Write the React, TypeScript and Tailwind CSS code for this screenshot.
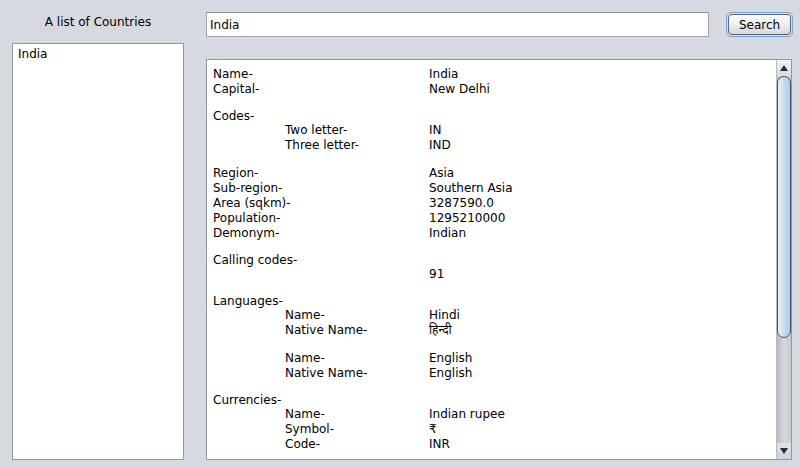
import React from "react";

type Row = { label: string; value?: string; indent?: boolean; header?: boolean; gap?: number };

const rows: Row[] = [
  { label: "Name-", value: "India" },
  { label: "Capital-", value: "New Delhi" },
  { label: "Codes-", header: true, gap: 12 },
  { label: "Two letter-", value: "IN", indent: true },
  { label: "Three letter-", value: "IND", indent: true },
  { label: "Region-", value: "Asia", gap: 13 },
  { label: "Sub-region-", value: "Southern Asia" },
  { label: "Area (sqkm)-", value: "3287590.0" },
  { label: "Population-", value: "1295210000" },
  { label: "Demonym-", value: "Indian" },
  { label: "Calling codes-", header: true, gap: 12 },
  { label: "", value: "91" },
  { label: "Languages-", header: true, gap: 12 },
  { label: "Name-", value: "Hindi", indent: true },
  { label: "Native Name-", value: "हिन्दी", indent: true },
  { label: "Name-", value: "English", indent: true, gap: 13 },
  { label: "Native Name-", value: "English", indent: true },
  { label: "Currencies-", header: true, gap: 12 },
  { label: "Name-", value: "Indian rupee", indent: true },
  { label: "Symbol-", value: "₹", indent: true },
  { label: "Code-", value: "INR", indent: true },
];

function ScrollBar() {
  return (
    <div className="w-[15px] h-full flex flex-col border-l border-[#b5b9c0] bg-gradient-to-r from-[#b9bdc4] via-[#d4d7dc] to-[#c6c9cf]">
      <div className="h-[16px] flex items-center justify-center bg-gradient-to-b from-[#f1f2f4] to-[#d9dce1]">
        <svg width="8" height="6" viewBox="0 0 8 6">
          <path d="M4 0 L8 6 L0 6 Z" fill="#2b2f36" />
        </svg>
      </div>
      <div className="h-[262px] rounded-b-[9px] rounded-t-[9px] border border-[#46505e] bg-gradient-to-r from-[#eaf2fa] via-[#c6dbef] to-[#aecbe6]" />
      <div className="flex-1" />
      <div className="h-[16px] flex items-center justify-center bg-gradient-to-b from-[#e2e4e8] to-[#cfd2d8]">
        <svg width="8" height="6" viewBox="0 0 8 6">
          <path d="M0 0 L8 0 L4 6 Z" fill="#2b2f36" />
        </svg>
      </div>
    </div>
  );
}

export default function App() {
  return (
    <div className="w-[800px] h-[468px] bg-[#d6d9df] flex font-['DejaVu_Sans','Noto_Sans',sans-serif] text-[12px] text-black">
      <div className="w-[184px] pl-[12px] flex flex-col">
        <div className="h-[43px] flex items-center justify-center">A list of Countries</div>
        <div className="h-[417px] bg-white border border-[#92969d] px-[5px] pt-[3px]">
          <div className="leading-[15px]">India</div>
        </div>
      </div>
      <div className="pl-[22px] flex flex-col">
        <div className="h-[59px] pt-[12px] flex items-start">
          <div className="w-[503px] h-[25px] bg-white border border-[#9ea2a9] border-t-[#8c9096] flex items-center px-[3px]">
            India
          </div>
          <div className="ml-[17px] w-[67px] h-[25px] rounded-[5px] border border-[#7fa4cf] p-px">
            <div className="w-full h-full rounded-[4px] border border-[#5e6774] bg-gradient-to-b from-[#fbfcfd] via-[#eceef1] to-[#d5d8de] flex items-center justify-center">
              Search
            </div>
          </div>
        </div>
        <div className="w-[586px] h-[401px] bg-white border border-[#92969d] flex">
          <div className="flex-1 pl-[6px] pt-[7px] leading-[15px]">
            {rows.map((r, i) => (
              <div
                key={i}
                className={`flex ${r.header ? "h-[14px]" : "h-[15px]"} ${
                  r.gap === 12 ? "mt-[12px]" : r.gap === 13 ? "mt-[13px]" : ""
                }`}
              >
                <div className={`w-[216px] whitespace-nowrap ${r.indent ? "pl-[72px]" : ""}`}>{r.label}</div>
                <div className="whitespace-nowrap">{r.value}</div>
              </div>
            ))}
          </div>
          <ScrollBar />
        </div>
      </div>
    </div>
  );
}
